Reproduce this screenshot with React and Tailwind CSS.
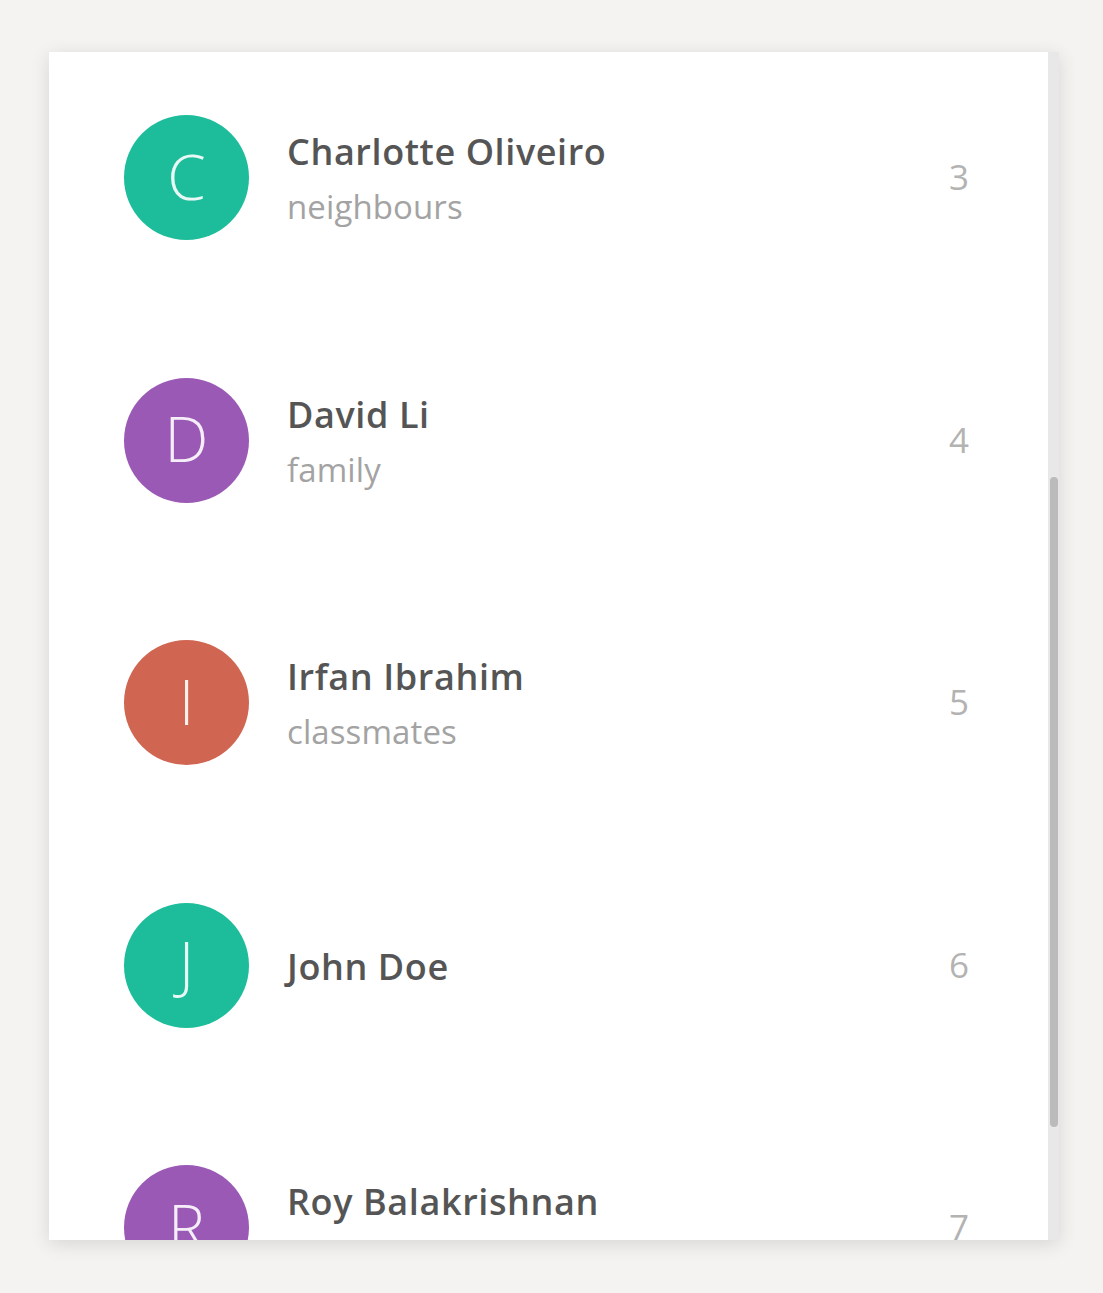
import React from 'react';

const contacts = [
  { name: 'Charlotte Oliveiro', group: 'neighbours', count: 3, color: 'bg-[#1dbd9b]' },
  { name: 'David Li', group: 'family', count: 4, color: 'bg-[#9b59b6]' },
  { name: 'Irfan Ibrahim', group: 'classmates', count: 5, color: 'bg-[#d06551]' },
  { name: 'John Doe', group: null, count: 6, color: 'bg-[#1dbd9b]' },
  { name: 'Roy Balakrishnan', group: 'colleagues', count: 7, color: 'bg-[#9b59b6]' },
];

const ContactRow = ({ contact }) => (
  <div className="flex items-center h-[125px] shrink-0">
    <div className={`w-[125px] h-[125px] rounded-full flex items-center justify-center shrink-0 ${contact.color}`}>
      <span className="text-[62px] font-light leading-none text-white/90 -mt-1">{contact.name[0]}</span>
    </div>
    <div className="flex-1 ml-[38px] flex flex-col pt-[4px]">
      <h3 className="text-[36px] font-semibold leading-[44px] text-[#555555] tracking-[0.6px] whitespace-nowrap">{contact.name}</h3>
      {contact.group && (
        <p className="text-[33px] leading-[44px] text-[#a3a3a3] mt-[11px] tracking-[0.1px]">{contact.group}</p>
      )}
    </div>
    <span className="w-[40px] text-center text-[35px] text-[#b3b3b3] mr-[69px]">{contact.count}</span>
  </div>
);

export default function App() {
  return (
    <div className="min-h-screen bg-[#f4f3f1] pt-[52px] pl-[49px]" style={{ fontFamily: '"Open Sans", "Noto Sans", sans-serif' }}>
      <div className="w-[1010px] h-[1188px] bg-white flex shadow-[0_4px_18px_rgba(0,0,0,0.12)]">
        <div className="flex-1 overflow-hidden pl-[75px] pt-[63px] flex flex-col gap-[137.5px]">
          {contacts.map((c) => (
            <ContactRow key={c.name} contact={c} />
          ))}
        </div>
        <div className="w-[11px] bg-[#e8e8e8] flex justify-center pt-[425px]">
          <div className="w-[8px] h-[650px] rounded-full bg-[#bcbbbc]" />
        </div>
      </div>
    </div>
  );
}
